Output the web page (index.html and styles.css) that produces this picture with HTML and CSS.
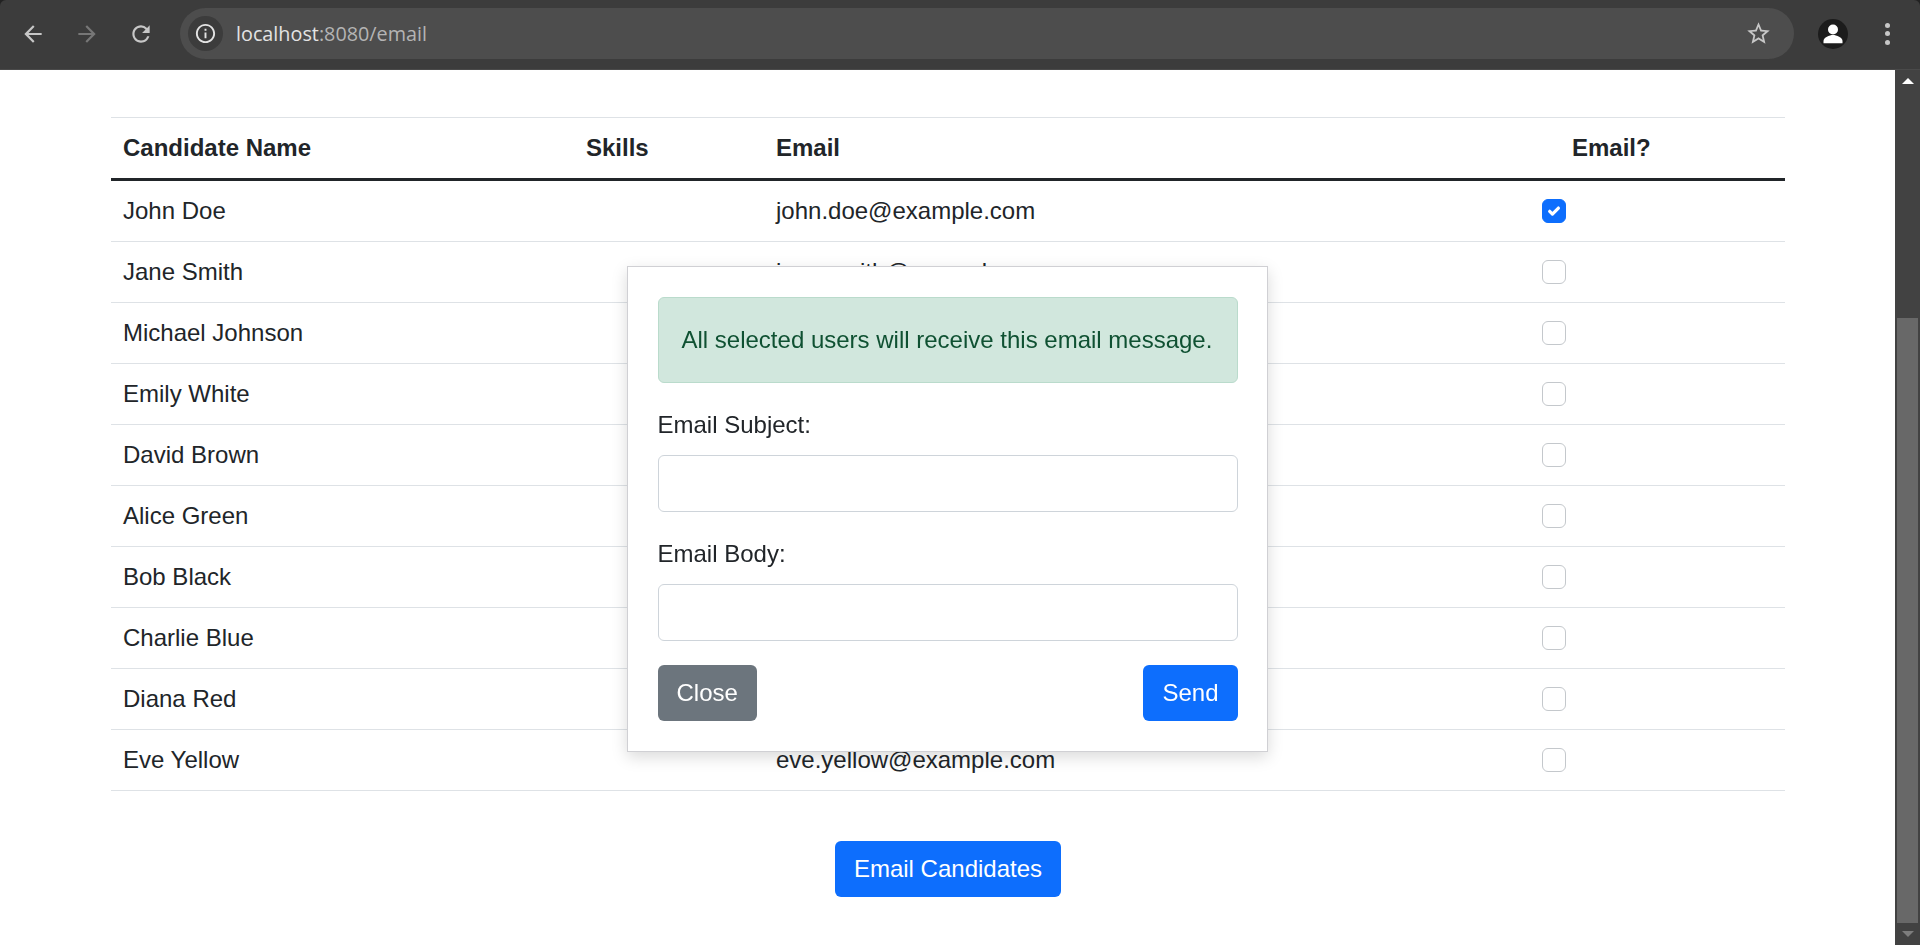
FILE: index.html
```html
<!DOCTYPE html>
<html lang="en">
<head>
	<title>Email Candidates</title>
	<meta charset="utf-8" />
	<link rel="stylesheet" href="styles.css">
</head>
<body>
	<div class="frame">
		<div class="toolbar">
			<svg class="tool-icon" viewBox="0 0 24 24"><path d="M20 11H7.83l5.59-5.59L12 4l-8 8 8 8 1.41-1.41L7.83 13H20v-2z"/></svg>
			<svg class="tool-icon dim" viewBox="0 0 24 24"><path d="M4 11h12.17l-5.59-5.59L12 4l8 8-8 8-1.41-1.41L16.17 13H4v-2z"/></svg>
			<svg class="tool-icon" viewBox="0 0 24 24"><path d="M17.65 6.35A7.958 7.958 0 0 0 12 4c-4.42 0-7.99 3.58-7.99 8s3.57 8 7.99 8c3.73 0 6.84-2.55 7.73-6h-2.08A5.99 5.99 0 0 1 12 18c-3.31 0-6-2.69-6-6s2.69-6 6-6c1.66 0 3.14.69 4.22 1.78L13 11h7V4l-2.35 2.35z"/></svg>
			<div class="address">
				<div class="site-info">
					<svg viewBox="0 0 24 24"><path d="M11 7h2v2h-2V7zm0 4h2v6h-2v-6zm1-9C6.48 2 2 6.48 2 12s4.48 10 10 10 10-4.48 10-10S17.52 2 12 2zm0 18c-4.41 0-8-3.59-8-8s3.59-8 8-8 8 3.59 8 8-3.59 8-8 8z"/></svg>
				</div>
				<div class="url">localhost<span class="url-rest">:8080/email</span></div>
				<svg class="star" viewBox="0 0 24 24"><path d="M22 9.24l-7.19-.62L12 2 9.19 8.63 2 9.24l5.46 4.73L5.82 21 12 17.27 18.18 21l-1.63-7.03L22 9.24zM12 15.4l-3.76 2.27 1-4.28-3.32-2.88 4.38-.38L12 6.1l1.71 4.04 4.38.38-3.32 2.88 1 4.28L12 15.4z"/></svg>
			</div>
			<div class="avatar">
				<svg viewBox="0 0 30 30"><circle cx="15" cy="10.5" r="5"/><path d="M5.5 24.3V22c0-3.6 6-6 9.5-6s9.5 2.4 9.5 6v2.3z"/></svg>
			</div>
			<div class="dots"><i></i><i></i><i></i></div>
		</div>
	</div>

	<div class="viewport">
		<main class="page">
			<table class="candidates">
				<thead>
					<tr>
						<th class="col-name">Candidate Name</th>
						<th class="col-skills">Skills</th>
						<th class="col-email">Email</th>
						<th class="col-check">Email?</th>
					</tr>
				</thead>
				<tbody>
					<tr><td>John Doe</td><td></td><td>john.doe@example.com</td><td><span class="check checked"><svg viewBox="0 0 24 24"><path d="M7.3 12.3l3 3 6.5-6.5"/></svg></span></td></tr>
					<tr><td>Jane Smith</td><td></td><td>jane.smith@example.com</td><td><span class="check"></span></td></tr>
					<tr><td>Michael Johnson</td><td></td><td>michael.johnson@example.com</td><td><span class="check"></span></td></tr>
					<tr><td>Emily White</td><td></td><td>emily.white@example.com</td><td><span class="check"></span></td></tr>
					<tr><td>David Brown</td><td></td><td>david.brown@example.com</td><td><span class="check"></span></td></tr>
					<tr><td>Alice Green</td><td></td><td>alice.green@example.com</td><td><span class="check"></span></td></tr>
					<tr><td>Bob Black</td><td></td><td>bob.black@example.com</td><td><span class="check"></span></td></tr>
					<tr><td>Charlie Blue</td><td></td><td>charlie.blue@example.com</td><td><span class="check"></span></td></tr>
					<tr><td>Diana Red</td><td></td><td>diana.red@example.com</td><td><span class="check"></span></td></tr>
					<tr><td>Eve Yellow</td><td></td><td>eve.yellow@example.com</td><td><span class="check"></span></td></tr>
				</tbody>
			</table>
			<div class="actions">
				<a href="#" class="btn btn-primary">Email Candidates</a>
			</div>
		</main>
		<div class="scrollbar">
			<div class="scroll-btn"><span class="arrow-up"></span></div>
			<div class="scroll-track"><div class="scroll-thumb"></div></div>
			<div class="scroll-btn"><span class="arrow-down"></span></div>
		</div>
	</div>

	<div class="modal">
		<div class="alert">All selected users will receive this email message.</div>
		<label class="field-label" for="subject">Email Subject:</label>
		<input class="field" type="text" id="subject" />
		<label class="field-label" for="body">Email Body:</label>
		<input class="field" type="text" id="body" />
		<div class="modal-footer">
			<a href="#" class="btn btn-secondary">Close</a>
			<a href="#" class="btn btn-primary">Send</a>
		</div>
	</div>
</body>
</html>
```

FILE: styles.css
```css
* {
	box-sizing: border-box;
}

html, body {
	height: 100%;
}

body {
	margin: 0;
	overflow: hidden;
	background-color: #fff;
	color: #212529;
	font-family: "Liberation Sans", Arial, sans-serif;
	font-size: 24px;
	line-height: 36px;
}

/* browser chrome */
.frame {
	background-color: #222;
}

.toolbar {
	display: flex;
	align-items: center;
	height: 70px;
	padding: 0 27px 2px 20px;
	border-radius: 6px 6px 0 0;
	background-color: #3c3c3c;
	border-bottom: 1px solid #4a4a4a;
}

.tool-icon {
	width: 26px;
	height: 26px;
	margin-right: 28px;
	fill: #c7c7c7;
}

.tool-icon.dim {
	fill: #777;
}

.tool-icon:nth-child(3) {
	margin-right: 26px;
}

.address {
	display: flex;
	align-items: center;
	flex: 1;
	height: 51px;
	padding: 0 22px 0 8px;
	border-radius: 26px;
	background-color: #4d4d4d;
}

.site-info {
	display: flex;
	align-items: center;
	justify-content: center;
	width: 35px;
	height: 35px;
	margin-right: 13px;
	border-radius: 50%;
	background-color: #3c3c3c;
}

.site-info svg {
	width: 23px;
	height: 23px;
	fill: #e3e3e3;
}

.url {
	flex: 1;
	color: #e3e3e3;
	font-family: "Open Sans", sans-serif;
	font-size: 19.8px;
}

.url-rest {
	color: #b4b4b4;
}

.star {
	width: 27px;
	height: 27px;
	fill: #c7c7c7;
}

.avatar {
	width: 30px;
	height: 30px;
	margin-left: 24px;
	border-radius: 50%;
	background-color: #1c1c1c;
}

.avatar svg {
	display: block;
	fill: #fff;
}

.dots {
	display: flex;
	flex-direction: column;
	align-items: center;
	gap: 3.5px;
	width: 12px;
	margin-left: 33px;
}

.dots i {
	width: 5px;
	height: 5px;
	border-radius: 50%;
	background-color: #c7c7c7;
}

/* page */
.viewport {
	display: flex;
	height: 875px;
}

.page {
	flex: 1;
	padding: 47px 110px 0 111px;
}

.candidates {
	width: 100%;
	table-layout: fixed;
	border-collapse: collapse;
	border-top: 1px solid #dee2e6;
}

.candidates th {
	height: 62px;
	padding: 0 12px;
	text-align: left;
	font-weight: bold;
	border-bottom: 3px solid #212529;
}

.candidates td {
	height: 61px;
	padding: 0 12px;
	border-bottom: 1px solid #dee2e6;
}

.candidates tbody tr:first-child td {
	height: 62px;
}

.col-name {
	width: 463px;
}

.col-skills {
	width: 190px;
}

.col-email {
	width: 766px;
}

.candidates th.col-check {
	padding-left: 42px;
}

.check {
	display: flex;
	width: 24px;
	height: 24px;
	border: 1px solid #c4c8cc;
	border-radius: 6px;
	background-color: #fff;
}

.check.checked {
	border-color: #0d6efd;
	background-color: #0d6efd;
}

.check svg {
	fill: none;
	stroke: #fff;
	stroke-width: 3.5;
	stroke-linecap: round;
	stroke-linejoin: round;
}

.actions {
	display: flex;
	justify-content: center;
	margin-top: 50px;
}

.btn {
	display: inline-block;
	padding: 10px 19px;
	border-radius: 6px;
	color: #fff;
	text-decoration: none;
	white-space: nowrap;
}

.btn-primary {
	background-color: #0d6efd;
}

.btn-secondary {
	background-color: #6c757d;
}

/* scrollbar */
.scrollbar {
	display: flex;
	flex-direction: column;
	width: 25px;
	background-color: #424242;
}

.scroll-btn {
	display: flex;
	align-items: center;
	justify-content: center;
	height: 22px;
}

.arrow-up {
	border-left: 6px solid transparent;
	border-right: 6px solid transparent;
	border-bottom: 6px solid #fff;
}

.arrow-down {
	border-left: 6px solid transparent;
	border-right: 6px solid transparent;
	border-top: 6px solid #7d7d7d;
}

.scroll-track {
	flex: 1;
	padding: 226px 2px 0;
}

.scroll-thumb {
	height: 100%;
	background-color: #686868;
}

/* dialog over the table */
.modal {
	position: fixed;
	left: 627px;
	top: 266px;
	width: 641px;
	height: 486px;
	padding: 30px 29.5px;
	background-color: #fff;
	border: 1px solid #d0d0d4;
	box-shadow: 0 5px 15px rgba(0, 0, 0, 0.15);
}

.alert {
	height: 86px;
	margin-bottom: 25px;
	padding: 24px 23px;
	border: 1px solid #badbcc;
	border-radius: 6px;
	background-color: #d1e7dd;
	color: #0f5132;
	white-space: nowrap;
}

.field-label {
	display: block;
	height: 33px;
	margin-bottom: 14px;
	line-height: 33px;
}

.field {
	display: block;
	width: 100%;
	height: 57px;
	margin-bottom: 24.5px;
	border: 1px solid #ced4da;
	border-radius: 6px;
	background-color: #fff;
}

.modal-footer {
	display: flex;
	justify-content: space-between;
}
```
